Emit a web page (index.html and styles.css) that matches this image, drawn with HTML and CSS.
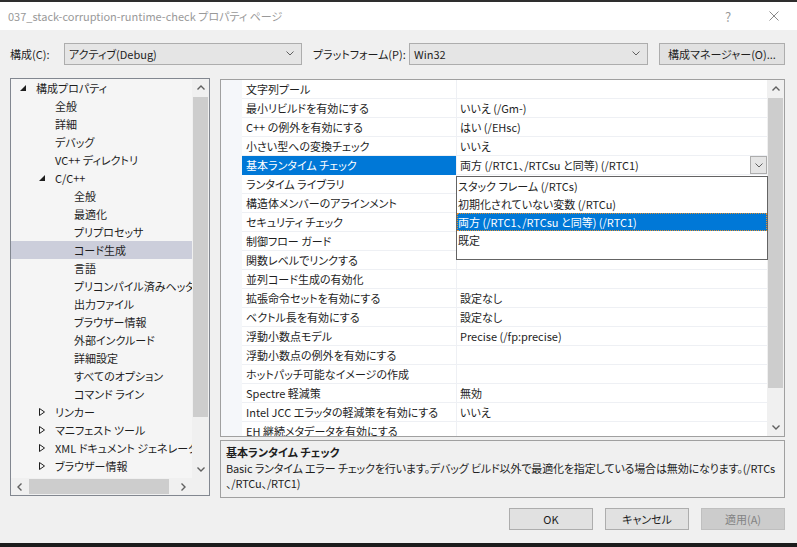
FILE: index.html
```html
<!DOCTYPE html>
<html lang="ja">
<head>
    <meta charset="UTF-8">
    <title>037_stack-corruption-runtime-check プロパティ ページ</title>
    <link rel="stylesheet" href="styles.css">
</head>
<body>
<div class="window">
    <div class="titlebar">
        <span class="title">037_stack-corruption-runtime-check プロパティ ページ</span>
        <span class="caption-btn help">?</span>
        <span class="caption-btn">
            <svg width="10" height="10" viewBox="0 0 10 10"><path d="M0.5 0.5 L9.5 9.5 M9.5 0.5 L0.5 9.5" stroke="#8a8a8a" stroke-width="1" fill="none"/></svg>
        </span>
    </div>

    <div class="content">
        <div class="config-row">
            <span class="lbl lbl-config">構成(C):</span>
            <div class="combo combo-config">
                <span>アクティブ(Debug)</span>
                <svg class="chev" width="8" height="5" viewBox="0 0 8 5"><polyline points="0.5,0.5 4,4 7.5,0.5" stroke="#606060" fill="none"/></svg>
            </div>
            <span class="lbl lbl-platform">プラットフォーム(P):</span>
            <div class="combo combo-platform">
                <span>Win32</span>
                <svg class="chev" width="8" height="5" viewBox="0 0 8 5"><polyline points="0.5,0.5 4,4 7.5,0.5" stroke="#606060" fill="none"/></svg>
            </div>
            <button class="btn btn-manager">構成マネージャー(O)...</button>
        </div>

        <div class="panes">
            <!-- category tree -->
            <div class="tree">
                <div class="tree-body">
                    <ul class="tree-list">
                        <li class="tree-row l0"><span class="toggle"><svg width="6" height="6" viewBox="0 0 6 6"><polygon points="6,0 6,6 0,6" fill="#1e1e1e"/></svg></span>構成プロパティ</li>
                        <li class="tree-row l1"><span class="toggle"></span>全般</li>
                        <li class="tree-row l1"><span class="toggle"></span>詳細</li>
                        <li class="tree-row l1"><span class="toggle"></span>デバッグ</li>
                        <li class="tree-row l1"><span class="toggle"></span>VC++ ディレクトリ</li>
                        <li class="tree-row l1"><span class="toggle"><svg width="6" height="6" viewBox="0 0 6 6"><polygon points="6,0 6,6 0,6" fill="#1e1e1e"/></svg></span>C/C++</li>
                        <li class="tree-row l2"><span class="toggle"></span>全般</li>
                        <li class="tree-row l2"><span class="toggle"></span>最適化</li>
                        <li class="tree-row l2"><span class="toggle"></span>プリプロセッサ</li>
                        <li class="tree-row l2 sel"><span class="toggle"></span>コード生成</li>
                        <li class="tree-row l2"><span class="toggle"></span>言語</li>
                        <li class="tree-row l2"><span class="toggle"></span>プリコンパイル済みヘッダー</li>
                        <li class="tree-row l2"><span class="toggle"></span>出力ファイル</li>
                        <li class="tree-row l2"><span class="toggle"></span>ブラウザー情報</li>
                        <li class="tree-row l2"><span class="toggle"></span>外部インクルード</li>
                        <li class="tree-row l2"><span class="toggle"></span>詳細設定</li>
                        <li class="tree-row l2"><span class="toggle"></span>すべてのオプション</li>
                        <li class="tree-row l2"><span class="toggle"></span>コマンド ライン</li>
                        <li class="tree-row l1"><span class="toggle"><svg width="6" height="8" viewBox="0 0 6 8"><polygon points="0.5,0.5 5.5,4 0.5,7.5" fill="none" stroke="#1e1e1e"/></svg></span>リンカー</li>
                        <li class="tree-row l1"><span class="toggle"><svg width="6" height="8" viewBox="0 0 6 8"><polygon points="0.5,0.5 5.5,4 0.5,7.5" fill="none" stroke="#1e1e1e"/></svg></span>マニフェスト ツール</li>
                        <li class="tree-row l1"><span class="toggle"><svg width="6" height="8" viewBox="0 0 6 8"><polygon points="0.5,0.5 5.5,4 0.5,7.5" fill="none" stroke="#1e1e1e"/></svg></span>XML ドキュメント ジェネレーター</li>
                        <li class="tree-row l1"><span class="toggle"><svg width="6" height="8" viewBox="0 0 6 8"><polygon points="0.5,0.5 5.5,4 0.5,7.5" fill="none" stroke="#1e1e1e"/></svg></span>ブラウザー情報</li>
                        <li class="tree-row l1"><span class="toggle"><svg width="6" height="8" viewBox="0 0 6 8"><polygon points="0.5,0.5 5.5,4 0.5,7.5" fill="none" stroke="#1e1e1e"/></svg></span>ビルド イベント</li>
                    </ul>
                    <div class="vscroll">
                        <div class="arrow"><svg width="8" height="5" viewBox="0 0 8 5"><polyline points="0.5,4.5 4,1 7.5,4.5" stroke="#606060" stroke-width="1.4" fill="none"/></svg></div>
                        <div class="thumb tree-thumb"></div>
                        <div class="track"></div>
                        <div class="arrow"><svg width="8" height="5" viewBox="0 0 8 5"><polyline points="0.5,0.5 4,4 7.5,0.5" stroke="#606060" stroke-width="1.4" fill="none"/></svg></div>
                    </div>
                </div>
                <div class="hscroll-row">
                    <div class="hscroll">
                        <div class="arrow"><svg width="5" height="8" viewBox="0 0 5 8"><polyline points="4.5,0.5 1,4 4.5,7.5" stroke="#606060" stroke-width="1.4" fill="none"/></svg></div>
                        <div class="thumb hthumb"></div>
                        <div class="track"></div>
                        <div class="arrow"><svg width="5" height="8" viewBox="0 0 5 8"><polyline points="0.5,0.5 4,4 0.5,7.5" stroke="#606060" stroke-width="1.4" fill="none"/></svg></div>
                    </div>
                    <div class="corner"></div>
                </div>
            </div>

            <div class="right-pane">
                <!-- property grid -->
                <div class="grid">
                    <div class="grid-rows">
                        <div class="prop-row"><span class="gutter"></span><span class="pname">文字列プール</span><span class="pval"></span></div>
                        <div class="prop-row"><span class="gutter"></span><span class="pname">最小リビルドを有効にする</span><span class="pval">いいえ (/Gm-)</span></div>
                        <div class="prop-row"><span class="gutter"></span><span class="pname">C++ の例外を有効にする</span><span class="pval">はい (/EHsc)</span></div>
                        <div class="prop-row"><span class="gutter"></span><span class="pname">小さい型への変換チェック</span><span class="pval">いいえ</span></div>
                        <div class="prop-row"><span class="gutter"></span><span class="pname sel">基本ランタイム チェック</span><span class="pval"><span class="vtext">両方 (/RTC1、/RTCsu と同等) (/RTC1)</span><span class="ddbtn"><svg width="8" height="5" viewBox="0 0 8 5"><polyline points="0.5,0.5 4,4 7.5,0.5" stroke="#606060" fill="none"/></svg></span></span></div>
                        <div class="prop-row"><span class="gutter"></span><span class="pname">ランタイム ライブラリ</span><span class="pval"></span></div>
                        <div class="prop-row"><span class="gutter"></span><span class="pname">構造体メンバーのアラインメント</span><span class="pval"></span></div>
                        <div class="prop-row"><span class="gutter"></span><span class="pname">セキュリティ チェック</span><span class="pval"></span></div>
                        <div class="prop-row"><span class="gutter"></span><span class="pname">制御フロー ガード</span><span class="pval"></span></div>
                        <div class="prop-row"><span class="gutter"></span><span class="pname">関数レベルでリンクする</span><span class="pval"></span></div>
                        <div class="prop-row"><span class="gutter"></span><span class="pname">並列コード生成の有効化</span><span class="pval"></span></div>
                        <div class="prop-row"><span class="gutter"></span><span class="pname">拡張命令セットを有効にする</span><span class="pval">設定なし</span></div>
                        <div class="prop-row"><span class="gutter"></span><span class="pname">ベクトル長を有効にする</span><span class="pval">設定なし</span></div>
                        <div class="prop-row"><span class="gutter"></span><span class="pname">浮動小数点モデル</span><span class="pval">Precise (/fp:precise)</span></div>
                        <div class="prop-row"><span class="gutter"></span><span class="pname">浮動小数点の例外を有効にする</span><span class="pval"></span></div>
                        <div class="prop-row"><span class="gutter"></span><span class="pname">ホットパッチ可能なイメージの作成</span><span class="pval"></span></div>
                        <div class="prop-row"><span class="gutter"></span><span class="pname">Spectre 軽減策</span><span class="pval">無効</span></div>
                        <div class="prop-row"><span class="gutter"></span><span class="pname">Intel JCC エラッタの軽減策を有効にする</span><span class="pval">いいえ</span></div>
                        <div class="prop-row"><span class="gutter"></span><span class="pname">EH 継続メタデータを有効にする</span><span class="pval"></span></div>
                    </div>
                    <div class="vscroll">
                        <div class="arrow"><svg width="8" height="5" viewBox="0 0 8 5"><polyline points="0.5,4.5 4,1 7.5,4.5" stroke="#606060" stroke-width="1.4" fill="none"/></svg></div>
                        <div class="thumb grid-thumb"></div>
                        <div class="track"></div>
                        <div class="arrow"><svg width="8" height="5" viewBox="0 0 8 5"><polyline points="0.5,0.5 4,4 7.5,0.5" stroke="#606060" stroke-width="1.4" fill="none"/></svg></div>
                    </div>

                    <!-- open dropdown -->
                    <ul class="dropdown-list">
                        <li>スタック フレーム (/RTCs)</li>
                        <li>初期化されていない変数 (/RTCu)</li>
                        <li class="sel">両方 (/RTC1、/RTCsu と同等) (/RTC1)</li>
                        <li>既定</li>
                    </ul>
                </div>

                <div class="desc">
                    <div class="desc-title">基本ランタイム チェック</div>
                    <div class="desc-text">Basic ランタイム エラー チェックを行います。デバッグ ビルド以外で最適化を指定している場合は無効になります。(/RTCs<br>、/RTCu、/RTC1)</div>
                </div>
            </div>
        </div>

        <div class="buttons">
            <button class="btn">OK</button>
            <button class="btn">キャンセル</button>
            <button class="btn disabled">適用(A)</button>
        </div>
    </div>
</div>
</body>
</html>
```

FILE: styles.css
```css
* {
    box-sizing: border-box;
}
body {
    margin: 0;
    width: 797px;
    height: 547px;
    overflow: hidden;
    background-color: #f0f0f0;
    font-family: "Noto Sans CJK JP", "Noto Sans", sans-serif;
    font-size: 11px;
    font-feature-settings: "palt";
    color: #1e1e1e;
}
.window {
    display: flex;
    flex-direction: column;
    height: 547px;
    border-top: 2px solid #2e2e2e;
    border-bottom: 4px solid #1c1c1c;
}

/* title bar */
.titlebar {
    display: flex;
    align-items: center;
    height: 28px;
    padding-left: 8px;
    background: #fff;
}
.title {
    flex: 1;
    color: #999;
}
.caption-btn {
    display: flex;
    align-items: center;
    justify-content: center;
    width: 46px;
    height: 28px;
    color: #999;
}
.help {
    font-size: 13px;
}

.content {
    flex: 1;
    padding: 12px 12px 0 10px;
}

/* configuration row */
.config-row {
    display: flex;
    align-items: center;
    height: 23px;
}
.lbl {
    white-space: nowrap;
}
.lbl-config {
    width: 54px;
}
.lbl-platform {
    width: 96px;
    margin-left: 11px;
}
.combo {
    display: flex;
    align-items: center;
    justify-content: space-between;
    height: 22px;
    padding: 0 7px 0 4px;
    border: 1px solid #adadad;
    background: #e5e5e5;
}
.combo-config {
    width: 238px;
}
.combo-platform {
    width: 239px;
}
.btn {
    height: 22px;
    padding: 0;
    border: 1px solid #adadad;
    background: #e1e1e1;
    font-family: inherit;
    font-size: 11px;
    font-feature-settings: "palt";
    color: #1e1e1e;
}
.btn-manager {
    width: 126px;
    margin-left: 11px;
}

/* panes */
.panes {
    display: flex;
    gap: 10px;
    margin-top: 13px;
}

.tree {
    display: flex;
    flex-direction: column;
    width: 200px;
    height: 418px;
    border: 1px solid #828790;
    background: #f5f5f5;
}
.tree-body {
    display: flex;
    height: 399px;
}
.tree-list {
    width: 181px;
    margin: 0;
    padding: 0;
    list-style: none;
    overflow: hidden;
}
.tree-row {
    display: flex;
    align-items: center;
    height: 18px;
    white-space: nowrap;
}
.tree-row.sel {
    background: #cccedb;
}
.toggle {
    display: flex;
    align-items: center;
    flex: none;
    width: 16px;
}
.l0 { padding-left: 9px; }
.l1 { padding-left: 28px; }
.l2 { padding-left: 47px; }

.vscroll {
    display: flex;
    flex-direction: column;
    flex: none;
    width: 17px;
    background: #f0f0f0;
}
.arrow {
    display: flex;
    align-items: center;
    justify-content: center;
    flex: none;
    width: 17px;
    height: 17px;
}
.thumb {
    flex: none;
    background: #cdcdcd;
}
.track {
    flex: 1;
}
.vscroll .thumb {
    margin: 1px 1px 0;
}
.tree-thumb {
    height: 320px;
}
.grid-thumb {
    height: 290px;
}
.hscroll-row {
    display: flex;
    height: 17px;
}
.hscroll {
    display: flex;
    flex: 1;
    background: #f0f0f0;
}
.hthumb {
    width: 140px;
    margin: 1px 0 1px 1px;
}
.corner {
    width: 17px;
    background: #f0f0f0;
}

/* property grid */
.right-pane {
    display: flex;
    flex-direction: column;
    width: 565px;
    margin-top: 1px;
}
.grid {
    position: relative;
    display: flex;
    height: 358px;
    border: 1px solid #a0a0a0;
    background: #fff;
}
.grid-rows {
    flex: 1;
    overflow: hidden;
    background: linear-gradient(to right, #f5f7fa 21px, #fff 21px);
}
.prop-row {
    display: flex;
    height: 19px;
    white-space: nowrap;
}
.gutter {
    flex: none;
    width: 21px;
    background: #f5f7fa;
}
.pname {
    display: flex;
    align-items: center;
    flex: none;
    width: 214px;
    padding-left: 4px;
    border-bottom: 1px solid #eef0f4;
    overflow: hidden;
}
.pname.sel {
    background: #0078d7;
    color: #fff;
    border-bottom-color: #0078d7;
}
.pval {
    display: flex;
    align-items: center;
    flex: 1;
    padding-left: 3px;
    border-left: 1px solid #eef0f4;
    border-bottom: 1px solid #eef0f4;
}
.vtext {
    flex: 1;
}
.ddbtn {
    display: flex;
    align-items: center;
    justify-content: center;
    width: 17px;
    height: 18px;
    border: 1px solid #adadad;
    background: #e5e5e5;
}

.dropdown-list {
    position: absolute;
    left: 235px;
    top: 96px;
    width: 312px;
    height: 84px;
    margin: 0;
    padding: 0;
    list-style: none;
    border: 1px solid #646464;
    background: #fff;
}
.dropdown-list li {
    display: flex;
    align-items: center;
    height: 18px;
    padding-left: 1px;
    white-space: nowrap;
}
.dropdown-list li.sel {
    background: #0078d7;
    color: #fff;
    outline: 1px dotted #e8902a;
    outline-offset: -1px;
}

/* description */
.desc {
    height: 58px;
    margin-top: 3px;
    padding: 2px 5px;
    border: 1px solid #a0a0a0;
    background: #f0f0f0;
}
.desc-title {
    height: 18px;
    line-height: 18px;
    font-weight: bold;
}
.desc-text {
    line-height: 15px;
    letter-spacing: -0.15px;
    white-space: nowrap;
    overflow: hidden;
}

/* dialog buttons */
.buttons {
    display: flex;
    justify-content: flex-end;
    gap: 12px;
    margin-top: 10px;
}
.buttons .btn {
    width: 84px;
}
.btn.disabled {
    border-color: #bfbfbf;
    background: #cccccc;
    color: #838383;
}
```
